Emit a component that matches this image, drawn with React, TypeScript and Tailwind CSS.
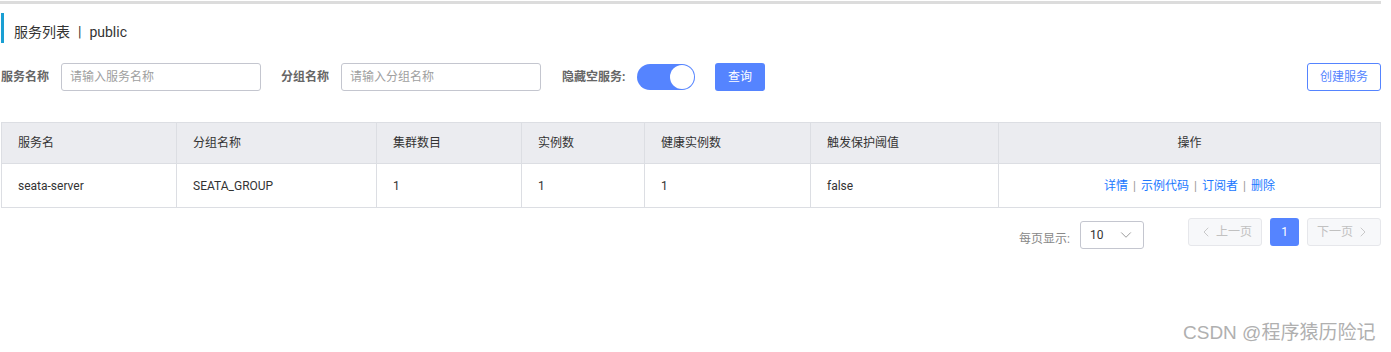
import { ChevronDown, ChevronLeft, ChevronRight } from "lucide-react";

const font = { fontFamily: "Roboto, 'Noto Sans CJK SC', sans-serif" };

const cols = [
  { title: "服务名", w: "w-[175px]" },
  { title: "分组名称", w: "w-[200px]" },
  { title: "集群数目", w: "w-[145px]" },
  { title: "实例数", w: "w-[123px]" },
  { title: "健康实例数", w: "w-[166px]" },
  { title: "触发保护阈值", w: "w-[188px]" },
];

const row = ["seata-server", "SEATA_GROUP", "1", "1", "1", "false"];

export default function App() {
  return (
    <div className="w-[1391px] h-[352px] bg-white relative text-[#333]" style={font}>
      <div className="w-[1381px] h-[3px] bg-[#dcdcdc] mt-[1px]" />

      <div className="flex items-center h-[30px] mt-[9px] ml-[1px] border-l-[3px] border-[#1a9fd3] pl-[10px] pt-[8px] text-[14px] text-[#333]">
        <span>服务列表</span>
        <span className="mx-[8px]">|</span>
        <span>public</span>
      </div>

      <div className="flex items-center mt-[20px] w-[1381px] h-[28px] pl-[1px]">
        <span className="text-[12px] font-bold text-[#666] w-[60px]">服务名称</span>
        <div className="w-[200px] h-[28px] border border-[#c4c6cf] rounded-[3px] flex items-center px-[8px] text-[12px] text-[#a0a0a0]">
          请输入服务名称
        </div>
        <span className="text-[12px] font-bold text-[#666] ml-[20px] w-[60px]">分组名称</span>
        <div className="w-[200px] h-[28px] border border-[#c4c6cf] rounded-[3px] flex items-center px-[8px] text-[12px] text-[#a0a0a0]">
          请输入分组名称
        </div>
        <span className="text-[12px] font-bold text-[#666] ml-[21px] w-[75px]">隐藏空服务:</span>
        <div className="w-[58px] h-[26px] rounded-full bg-[#5584ff] relative">
          <div className="absolute right-[1px] top-[1px] w-[24px] h-[24px] rounded-full bg-white" />
        </div>
        <button className="ml-[20px] w-[50px] h-[28px] rounded-[3px] bg-[#5584ff] text-white text-[12px]">
          查询
        </button>
        <div className="flex-1" />
        <button className="w-[74px] h-[28px] rounded-[3px] border border-[#5584ff] text-[#5584ff] text-[12px]">
          创建服务
        </button>
      </div>

      <div className="mt-[31px] ml-[1px] w-[1380px] border border-[#dcdee3] text-[12px]">
        <div className="flex h-[41px] bg-[#ebecf0] border-b border-[#dcdee3]">
          {cols.map((c) => (
            <div key={c.title} className={`${c.w} border-r border-[#dcdee3] flex items-center pl-[16px]`}>
              {c.title}
            </div>
          ))}
          <div className="flex-1 flex items-center justify-center">操作</div>
        </div>
        <div className="flex h-[43px]">
          {cols.map((c, i) => (
            <div key={c.title} className={`${c.w} border-r border-[#dcdee3] flex items-center pl-[16px]`}>
              {row[i]}
            </div>
          ))}
          <div className="flex-1 flex items-center justify-center text-[#2077ff] gap-[5px]">
            <span>详情</span>
            <span className="text-[#999]">|</span>
            <span>示例代码</span>
            <span className="text-[#999]">|</span>
            <span>订阅者</span>
            <span className="text-[#999]">|</span>
            <span>删除</span>
          </div>
        </div>
      </div>

      <div className="flex items-start w-[1381px] mt-[10px]">
        <div className="flex-1" />
        <span className="text-[12px] text-[#888] mr-[10px] mt-[7px] leading-[28px]">每页显示:</span>
        <div className="w-[64px] h-[28px] mt-[3px] border border-[#c4c6cf] rounded-[3px] flex items-center justify-between pl-[9px] pr-[8px] text-[12px] text-[#333]">
          <span>10</span>
          <ChevronDown className="w-[18px] h-[18px] text-[#999]" strokeWidth={1.3} />
        </div>
        <div className="ml-[44px] w-[74px] h-[28px] border border-[#e6e7eb] bg-[#f7f8fa] rounded-[3px] flex items-center justify-center gap-[2px] text-[12px] text-[#c1c1c1]">
          <ChevronLeft className="w-[16px] h-[16px]" strokeWidth={1.3} />
          <span>上一页</span>
        </div>
        <div className="ml-[8px] w-[29px] h-[28px] rounded-[3px] bg-[#5584ff] text-white text-[12px] flex items-center justify-center">
          1
        </div>
        <div className="ml-[8px] w-[74px] h-[28px] border border-[#e6e7eb] bg-[#f7f8fa] rounded-[3px] flex items-center justify-center gap-[2px] text-[12px] text-[#c1c1c1]">
          <span>下一页</span>
          <ChevronRight className="w-[16px] h-[16px]" strokeWidth={1.3} />
        </div>
      </div>

      <div
        className="absolute left-[1183px] top-[318px] text-[19px] text-[#b0b0b0]"
        style={{ fontFamily: "'Liberation Sans', 'Noto Sans CJK SC', sans-serif" }}
      >
        CSDN @程序猿历险记
      </div>
    </div>
  );
}
